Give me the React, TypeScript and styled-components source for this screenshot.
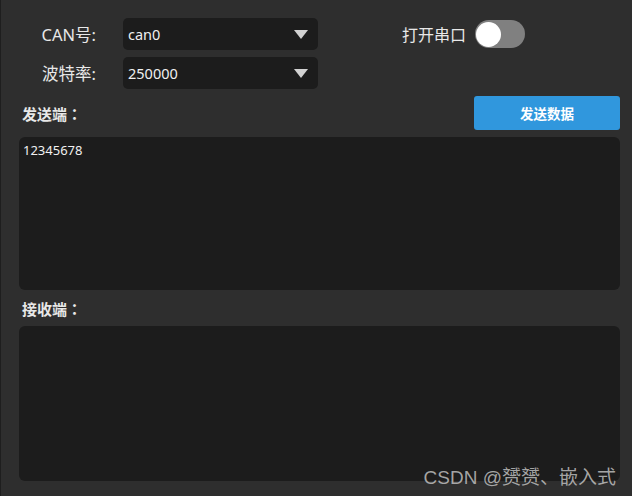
import React, { useState } from "react";
import styled, { createGlobalStyle } from "styled-components";

const GlobalStyle = createGlobalStyle`
  html, body {
    margin: 0;
    padding: 0;
    background: #2e2e2e;
  }
  * {
    box-sizing: border-box;
  }
`;

const FONT = `"Noto Sans", "Noto Sans CJK SC", sans-serif`;
const CJK = `"Noto Sans CJK SC", sans-serif`;

const App: React.FC = () => {
  const [open, setOpen] = useState(false);
  const [sendText, setSendText] = useState("12345678");

  return (
    <>
      <GlobalStyle />
      <Page>
        <TopGrid>
          <FieldLabel>CAN号:</FieldLabel>
          <Combo>
            <span>can0</span>
            <Arrow />
          </Combo>
          <SerialGroup>
            <SerialLabel>打开串口</SerialLabel>
            <Toggle $on={open} onClick={() => setOpen(!open)}>
              <Knob $on={open} />
            </Toggle>
          </SerialGroup>
          <FieldLabel>波特率:</FieldLabel>
          <Combo>
            <span>250000</span>
            <Arrow />
          </Combo>
        </TopGrid>

        <HeaderRow>
          <SectionTitle>
            发送端<Colon>：</Colon>
          </SectionTitle>
          <SendButton>发送数据</SendButton>
        </HeaderRow>
        <TextBox
          $height={153}
          value={sendText}
          onChange={(e) => setSendText(e.target.value)}
        />

        <ReceiveHeader>
          <SectionTitle>
            接收端<Colon>：</Colon>
          </SectionTitle>
        </ReceiveHeader>
        <TextBox $height={155} readOnly value="" />

        <Watermark>CSDN @赟赟、嵌入式</Watermark>
      </Page>
    </>
  );
};

export default App;

const Page = styled.div`
  position: relative;
  width: 632px;
  height: 496px;
  background: #2e2e2e;
  border-left: 1px solid #1e1e1e;
  padding: 18px 12px 15px 18px;
  display: flex;
  flex-direction: column;
  font-family: ${FONT};
  color: #e6e6e6;
  overflow: hidden;
`;

const TopGrid = styled.div`
  display: grid;
  grid-template-columns: 77px 195px 1fr;
  grid-template-rows: 32px 32px;
  column-gap: 27px;
  row-gap: 7px;
  align-items: center;
`;

const FieldLabel = styled.div`
  text-align: right;
  font-size: 16.5px;
  color: #e8e8e8;
  white-space: nowrap;
`;

const Combo = styled.div`
  height: 32px;
  background: #1c1c1c;
  border-radius: 5px;
  display: flex;
  align-items: center;
  justify-content: space-between;
  padding: 0 10px 0 5px;
  font-size: 14.5px;
  color: #f0f0f0;
`;

const Arrow = styled.div`
  width: 0;
  height: 0;
  border-left: 7px solid transparent;
  border-right: 7px solid transparent;
  border-top: 9px solid #d2d2d2;
`;

const SerialGroup = styled.div`
  display: flex;
  align-items: center;
  gap: 9px;
  padding-left: 57px;
`;

const SerialLabel = styled.span`
  font-family: ${CJK};
  font-size: 16px;
  color: #e8e8e8;
`;

const Toggle = styled.div<{ $on: boolean }>`
  width: 50px;
  height: 28px;
  border-radius: 14px;
  background: ${(p) => (p.$on ? "#3097dd" : "#808080")};
  display: flex;
  align-items: center;
  justify-content: ${(p) => (p.$on ? "flex-end" : "flex-start")};
  padding: 0 1px;
  cursor: pointer;
`;

const Knob = styled.div<{ $on: boolean }>`
  width: 25px;
  height: 25px;
  border-radius: 50%;
  background: #ffffff;
`;

const HeaderRow = styled.div`
  margin-top: 7px;
  height: 34px;
  display: flex;
  align-items: center;
  justify-content: space-between;
  padding-left: 3px;
`;

const SectionTitle = styled.span`
  font-family: ${CJK};
  font-size: 15px;
  font-weight: bold;
  color: #e8e8e8;
`;

const Colon = styled.span`
  font-family: "Noto Sans CJK TC", sans-serif;
`;

const SendButton = styled.button`
  width: 146px;
  height: 34px;
  border: none;
  border-radius: 3px;
  background: #3097dd;
  color: #ffffff;
  font-family: ${CJK};
  font-size: 13.5px;
  font-weight: bold;
  cursor: pointer;
`;

const TextBox = styled.textarea<{ $height: number }>`
  margin-top: 7px;
  height: ${(p) => p.$height}px;
  width: 100%;
  background: #1c1c1c;
  border: none;
  border-radius: 6px;
  resize: none;
  outline: none;
  padding: 4px 4px;
  font-family: ${FONT};
  font-size: 13px;
  color: #f0f0f0;
  flex-shrink: 0;
`;

const ReceiveHeader = styled.div`
  height: 29px;
  display: flex;
  align-items: flex-end;
  padding-left: 3px;
`;

const Watermark = styled.div`
  position: absolute;
  right: 16px;
  bottom: 7px;
  font-family: "Liberation Sans", "Noto Sans CJK SC", sans-serif;
  font-size: 19px;
  color: rgba(190, 190, 190, 0.85);
  pointer-events: none;
`;
